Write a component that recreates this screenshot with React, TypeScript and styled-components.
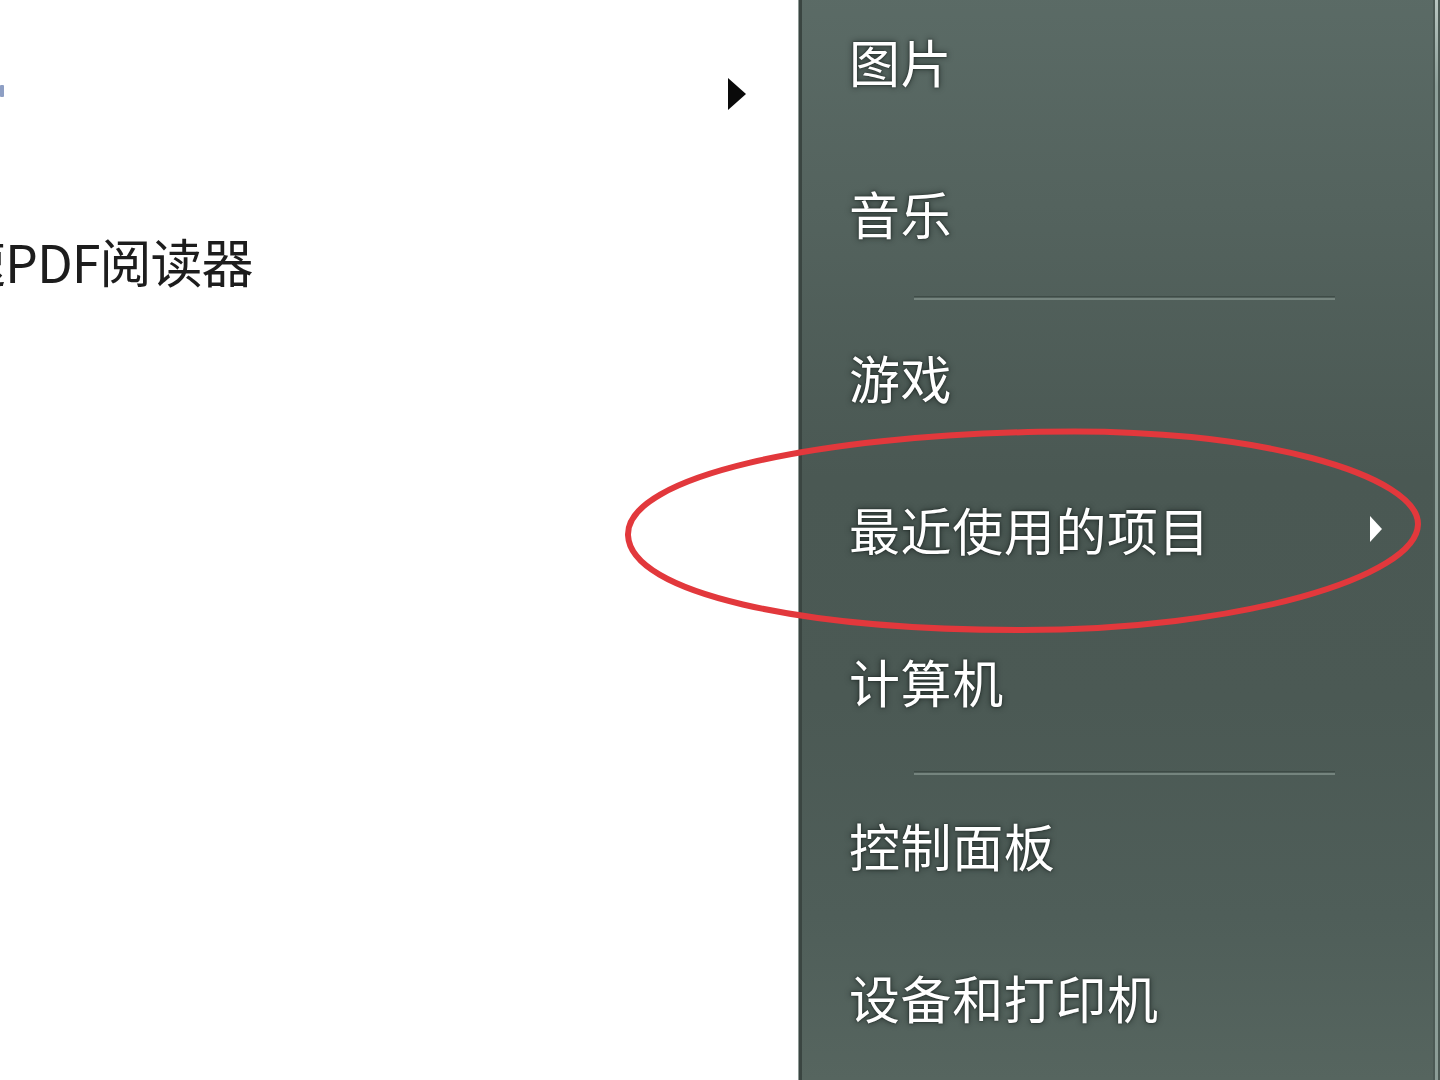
import styled, { createGlobalStyle } from 'styled-components';

const GlobalStyle = createGlobalStyle`
  html, body {
    margin: 0;
    padding: 0;
    background: #ffffff;
  }
  body {
    font-family: "Noto Sans CJK SC", "Noto Sans", sans-serif;
  }
`;

const Screen = styled.div`
  position: relative;
  width: 1440px;
  height: 1080px;
  overflow: hidden;
  display: grid;
  grid-template-columns: 799px 634px 7px;
`;

const ProgramsPane = styled.div`
  position: relative;
  background: #ffffff;
  overflow: hidden;
  display: flex;
  flex-direction: column;
`;

const ProgramRow = styled.div<{ $height: number }>`
  height: ${(p) => p.$height}px;
  display: flex;
  align-items: center;
  justify-content: space-between;
  padding-right: 52px;
`;

const ProgramLabel = styled.span`
  margin-left: -46px;
  font-size: 52px;
  color: #1d1d1d;
  letter-spacing: -1px;
  white-space: nowrap;
`;

const IconSliver = styled.span`
  display: block;
  width: 4px;
  height: 12px;
  margin-top: 2px;
  background: #8e9fc4;
  border-radius: 1px;
`;

const SubmenuArrow = styled.svg`
  display: block;
  margin-top: 8px;
`;

const PlacesPane = styled.div`
  position: relative;
  display: flex;
  flex-direction: column;
  margin-top: -15px;
  padding-left: 47px;
  padding-right: 50px;
  border-left: 3px solid #3a4541;
  box-shadow: -1px 0 0 #8e9995;
  background:
    radial-gradient(ellipse 260px 60px at 1220px 660px, rgba(40, 50, 47, 0.45), transparent 70%),
    radial-gradient(ellipse 300px 50px at 1180px 730px, rgba(40, 50, 47, 0.4), transparent 70%),
    linear-gradient(180deg, #5b6b66 0%, #54635e 20%, #4a5853 45%, #4b5954 65%, #4f5e59 85%, #56655f 100%);
`;

const PlaceItem = styled.div`
  height: 152px;
  display: flex;
  align-items: center;
  justify-content: space-between;
  flex-shrink: 0;
`;

const PlaceLabel = styled.span`
  font-size: 51px;
  line-height: 1;
  color: #ffffff;
  letter-spacing: 0.6px;
  text-shadow: 0 0 6px rgba(20, 28, 26, 0.75), 0 0 2px rgba(20, 28, 26, 0.9);
`;

const Separator = styled.div<{ $drop: number }>`
  height: 12px;
  flex-shrink: 0;
  display: flex;
  align-items: center;
  padding-top: ${(p) => p.$drop}px;
  padding-left: 65px;
  padding-right: 48px;
  margin-bottom: -${(p) => p.$drop}px;

  &::before {
    content: '';
    flex: 1;
    height: 1px;
    border-top: 1px solid rgba(52, 63, 59, 0.6);
    border-bottom: 2px solid rgba(135, 150, 144, 0.7);
  }
`;

const EdgeStrip = styled.div`
  display: grid;
  grid-template-columns: 2px 3px 2px;
  background: #4c5a55;

  &::before {
    content: '';
    grid-column: 2;
    background: linear-gradient(180deg, #b9c6c1 0%, #8ea09a 8%, #8c9d97 100%);
  }
`;

const Annotation = styled.svg`
  position: absolute;
  left: 620px;
  top: 420px;
  pointer-events: none;
`;

type Place = { label: string; submenu?: boolean } | { sep: number };

const places: Place[] = [
  { label: '图片' },
  { label: '音乐' },
  { sep: 3 },
  { label: '游戏' },
  { label: '最近使用的项目', submenu: true },
  { label: '计算机' },
  { sep: 10 },
  { label: '控制面板' },
  { label: '设备和打印机' },
];

const App = () => {
  return (
    <>
      <GlobalStyle />
      <Screen>
        <ProgramsPane>
          <ProgramRow $height={180}>
            <IconSliver />
            <SubmenuArrow width="20" height="34" viewBox="0 0 20 34">
              <path d="M1 1 L19 17 L1 33 Z" fill="#0a0a0a" />
            </SubmenuArrow>
          </ProgramRow>
          <ProgramRow $height={160}>
            <ProgramLabel>速PDF阅读器</ProgramLabel>
          </ProgramRow>
        </ProgramsPane>

        <PlacesPane>
          {places.map((place, i) =>
            'sep' in place ? (
              <Separator key={i} $drop={place.sep} />
            ) : (
              <PlaceItem key={i}>
                <PlaceLabel>{place.label}</PlaceLabel>
                {place.submenu && (
                  <svg width="14" height="28" viewBox="0 0 14 28">
                    <path d="M1 1 L13 14 L1 27 Z" fill="#ffffff" />
                  </svg>
                )}
              </PlaceItem>
            )
          )}
        </PlacesPane>

        <EdgeStrip />

        <Annotation width="810" height="225" viewBox="0 0 810 225">
          <path
            d="M 420 12 C 640 8, 800 60, 798 108 C 796 160, 620 212, 400 210 C 180 208, 10 170, 8 112 C 6 52, 200 14, 420 12 Z"
            fill="none"
            stroke="#e2383c"
            strokeWidth="6"
            transform="rotate(-0.5 405 110)"
          />
        </Annotation>
      </Screen>
    </>
  );
};

export default App;
